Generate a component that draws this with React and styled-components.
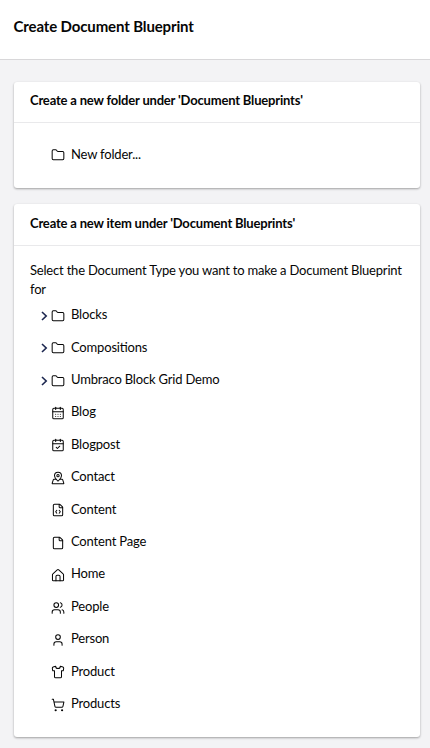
import React from "react";
import styled, { createGlobalStyle } from "styled-components";
import { Folder, CalendarDays, CalendarCheck, MapPinned, FileCode, File, Users, User, Shirt, ShoppingCart } from "lucide-react";

const Global = createGlobalStyle`
  *{box-sizing:border-box}
  body{margin:0;background:#f3f3f5;font-family:Lato,sans-serif;font-size:13px;letter-spacing:-.18px;font-feature-settings:"liga" 1;color:#060606}
`;
const Page = styled.main`height:748px;overflow:hidden;`;
const Header = styled.header`height:60px;background:#fff;border-bottom:1px solid #d8d7d9;padding:0 13.5px 8px;display:flex;align-items:center;`;
const Title = styled.h1`margin:0;font-size:15px;line-height:20px;font-weight:700;letter-spacing:-.13px;`;
const Content = styled.div`padding:22px 10px 0 14px;display:grid;gap:16px;`;
const Box = styled.section`height:${p => p.$height}px;background:#fff;border-radius:3px;box-shadow:0 1px 3px rgba(0,0,0,.12),0 1px 2px rgba(0,0,0,.24);`;
const BoxTitle = styled.h2`margin:0;height:${p => p.$height}px;border-bottom:1px solid #e9e9eb;padding:0 16px 4px;display:flex;align-items:center;font-size:13px;line-height:20px;font-weight:700;letter-spacing:-.185px;`;
const Body = styled.div`padding:${p => p.$top}px 16px 16px;`;
const Intro = styled.p`margin:0;font-size:13px;line-height:19px;letter-spacing:-.195px;`;
const List = styled.ul`margin:0;padding:0;list-style:none;`;
const Row = styled.li`height:32.422px;display:flex;align-items:center;`;
const Toggle = styled.span`width:21px;display:flex;justify-content:center;padding:1px 0 0 7px;color:#1b264f;`;
const Icon = styled.span`width:14px;height:14px;display:flex;margin:1px 6px 0 0;`;
const Label = styled.span`line-height:18px;padding-bottom:2.2px;`;

const Chevron = () => (
  <svg width="7" height="10" viewBox="0 0 7 10" fill="none" stroke="currentColor" strokeWidth="1.6"><path d="M1 1l4.2 4L1 9" /></svg>
);
const HomeIcon = ({ size, strokeWidth }) => (
  <svg width={size} height={size} viewBox="0 0 24 24" fill="none" stroke="currentColor" strokeWidth={strokeWidth} strokeLinecap="round" strokeLinejoin="round">
    <path d="M20 22H4a1.5 1.5 0 0 1-1.5-1.5v-9a2 2 0 0 1 .7-1.5l7.5-6.8a2 2 0 0 1 2.6 0l7.5 6.8a2 2 0 0 1 .7 1.5v9A1.5 1.5 0 0 1 20 22Z" />
    <path d="M8.5 22v-7.5a2 2 0 0 1 2-2h3a2 2 0 0 1 2 2V22" />
  </svg>
);

const items = [
  ["Blocks", Folder, true], ["Compositions", Folder, true], ["Umbraco Block Grid Demo", Folder, true],
  ["Blog", CalendarDays], ["Blogpost", CalendarCheck], ["Contact", MapPinned], ["Content", FileCode],
  ["Content Page", File], ["Home", HomeIcon], ["People", Users], ["Person", User], ["Product", Shirt], ["Products", ShoppingCart],
];
function Item({ label, Glyph, expandable }) {
  return <Row><Toggle>{expandable && <Chevron />}</Toggle><Icon><Glyph size={14} strokeWidth={1.75} /></Icon><Label>{label}</Label></Row>;
}
export default function App() {
  return <Page><Global />
    <Header><Title>Create Document Blueprint</Title></Header>
    <Content>
      <Box $height={106}><BoxTitle $height={41}>Create a new folder under 'Document Blueprints'</BoxTitle>
        <Body $top={15.5}><List><Item label="New folder..." Glyph={Folder} /></List></Body></Box>
      <Box $height={533}><BoxTitle $height={42}>Create a new item under 'Document Blueprints'</BoxTitle>
        <Body $top={15}><Intro>Select the Document Type you want to make a Document Blueprint for</Intro>
          <List>{items.map(([l, g, o]) => <Item key={l} label={l} Glyph={g} expandable={o} />)}</List></Body></Box>
    </Content></Page>;
}
